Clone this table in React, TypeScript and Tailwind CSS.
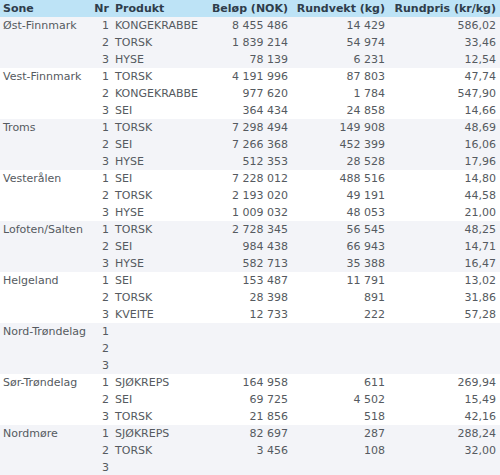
const groups: { sone: string; rows: [string, string, string, string][] }[] = [
  { sone: 'Øst-Finnmark', rows: [['KONGEKRABBE', '8 455 486', '14 429', '586,02'], ['TORSK', '1 839 214', '54 974', '33,46'], ['HYSE', '78 139', '6 231', '12,54']] },
  { sone: 'Vest-Finnmark', rows: [['TORSK', '4 191 996', '87 803', '47,74'], ['KONGEKRABBE', '977 620', '1 784', '547,90'], ['SEI', '364 434', '24 858', '14,66']] },
  { sone: 'Troms', rows: [['TORSK', '7 298 494', '149 908', '48,69'], ['SEI', '7 266 368', '452 399', '16,06'], ['HYSE', '512 353', '28 528', '17,96']] },
  { sone: 'Vesterålen', rows: [['SEI', '7 228 012', '488 516', '14,80'], ['TORSK', '2 193 020', '49 191', '44,58'], ['HYSE', '1 009 032', '48 053', '21,00']] },
  { sone: 'Lofoten/Salten', rows: [['TORSK', '2 728 345', '56 545', '48,25'], ['SEI', '984 438', '66 943', '14,71'], ['HYSE', '582 713', '35 388', '16,47']] },
  { sone: 'Helgeland', rows: [['SEI', '153 487', '11 791', '13,02'], ['TORSK', '28 398', '891', '31,86'], ['KVEITE', '12 733', '222', '57,28']] },
  { sone: 'Nord-Trøndelag', rows: [['', '', '', ''], ['', '', '', ''], ['', '', '', '']] },
  { sone: 'Sør-Trøndelag', rows: [['SJØKREPS', '164 958', '611', '269,94'], ['SEI', '69 725', '4 502', '15,49'], ['TORSK', '21 856', '518', '42,16']] },
  { sone: 'Nordmøre', rows: [['SJØKREPS', '82 697', '287', '288,24'], ['TORSK', '3 456', '108', '32,00'], ['', '', '', '']] },
];

export default function App() {
  return (
    <div className="w-[500px] h-[475px] overflow-hidden bg-white text-[11px] leading-[17px] text-[#555a60]" style={{ fontFamily: '"DejaVu Sans", sans-serif' }}>
      <table className="w-full table-fixed border-collapse">
        <colgroup>
          <col className="w-[88px]" />
          <col className="w-[22px]" />
          <col className="w-[90px]" />
          <col className="w-[90px]" />
          <col className="w-[97px]" />
          <col className="w-[113px]" />
        </colgroup>
        <thead>
          <tr className="h-[17px] bg-[#bde3f6] text-[#2f3d4b] font-bold">
            <th className="text-left pl-[3px] font-bold">Sone</th>
            <th className="text-right pr-[1px] font-bold">Nr</th>
            <th className="text-left pl-[5px] font-bold">Produkt</th>
            <th className="text-right pr-[2px] font-bold whitespace-nowrap">Beløp (NOK)</th>
            <th className="text-right pr-[2px] font-bold whitespace-nowrap">Rundvekt (kg)</th>
            <th className="text-right pr-[4px] font-bold whitespace-nowrap">Rundpris (kr/kg)</th>
          </tr>
        </thead>
        <tbody>
          {groups.map((g, gi) =>
            g.rows.map((r, ri) => (
              <tr key={g.sone + ri} className={`h-[17px] ${gi % 2 === 0 ? 'bg-[#f3f4f8]' : 'bg-white'}`}>
                <td className="pl-[3px] whitespace-nowrap align-top">{ri === 0 ? g.sone : ''}</td>
                <td className="text-right pr-[1px]">{ri + 1}</td>
                <td className="pl-[5px] whitespace-nowrap">{r[0]}</td>
                <td className="text-right pr-[2px]">{r[1]}</td>
                <td className="text-right pr-[2px]">{r[2]}</td>
                <td className="text-right pr-[4px]">{r[3]}</td>
              </tr>
            ))
          )}
        </tbody>
      </table>
    </div>
  );
}
